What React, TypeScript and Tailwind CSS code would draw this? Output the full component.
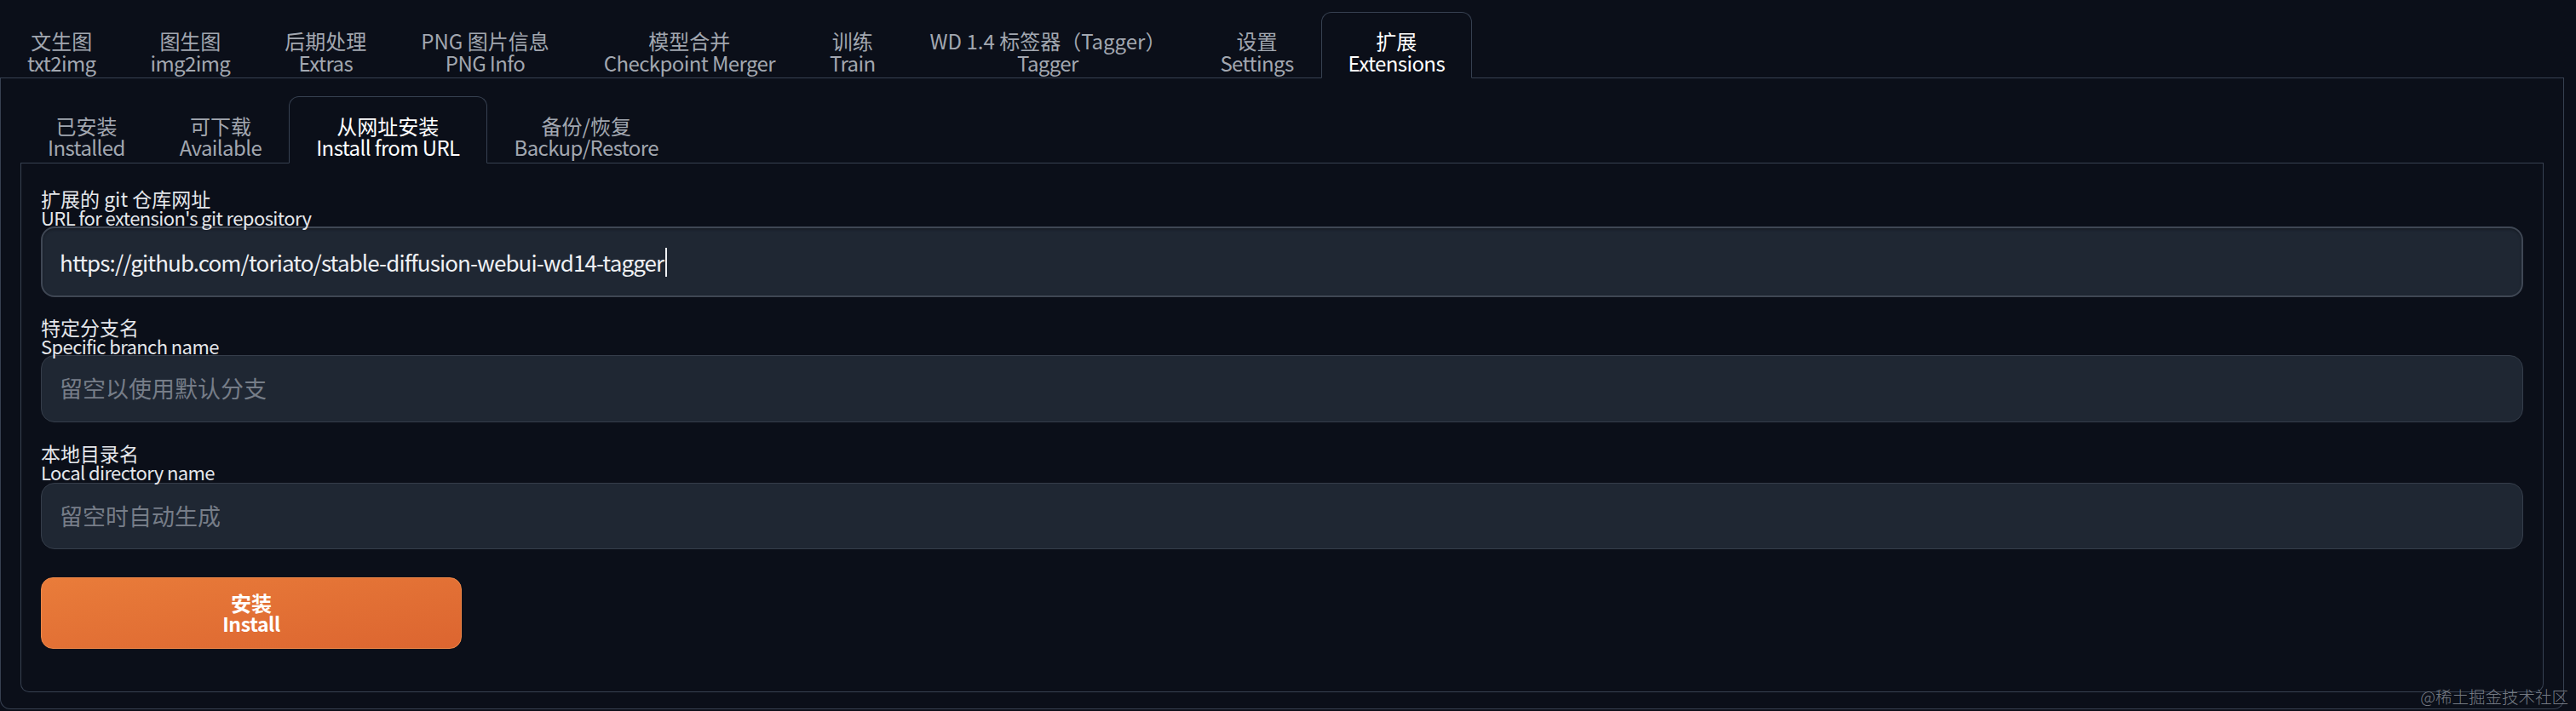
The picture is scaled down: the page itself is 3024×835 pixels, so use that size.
import React from 'react';

const topTabs: [string, string][] = [
  ['文生图', 'txt2img'],
  ['图生图', 'img2img'],
  ['后期处理', 'Extras'],
  ['PNG 图片信息', 'PNG Info'],
  ['模型合并', 'Checkpoint Merger'],
  ['训练', 'Train'],
  ['WD 1.4 标签器（Tagger）', 'Tagger'],
  ['设置', 'Settings'],
  ['扩展', 'Extensions'],
];

const subTabs: [string, string][] = [
  ['已安装', 'Installed'],
  ['可下载', 'Available'],
  ['从网址安装', 'Install from URL'],
  ['备份/恢复', 'Backup/Restore'],
];

interface TabProps {
  zh: string;
  en: string;
  active: boolean;
  sub?: boolean;
}

const Tab: React.FC<TabProps> = ({ zh, en, active, sub }) => (
  <div
    className={`-mb-px flex flex-col items-center border px-[31px] text-[24px] whitespace-nowrap ${
      sub ? 'h-[79px] pt-[21px] leading-[25px]' : 'h-[78px] pt-[20px] leading-[26px]'
    } ${
      active
        ? 'relative z-10 rounded-t-[12px] border-[#374151] border-b-[#0b0f19] bg-[#0b0f19] text-white'
        : 'border-transparent text-[#a2a7b0]'
    }`}
  >
    <span>{zh}</span>
    <span className="tracking-[-0.6px]">{en}</span>
  </div>
);

const Label: React.FC<{ zh: string; en: string }> = ({ zh, en }) => (
  <div className="flex flex-col leading-[22px] text-[#e5e7eb]">
    <span className="text-[23px]">{zh}</span>
    <span className="text-[22px] tracking-[-0.6px]">{en}</span>
  </div>
);

export default function App() {
  return (
    <div className="relative h-[835px] w-full bg-[#0b0f19] pt-[14px] font-['Noto_Sans_CJK_SC','Noto_Sans',sans-serif] antialiased">
      <div className="w-[3010px]">
        {/* top level tabs */}
        <div className="flex border-b border-[#374151]">
          {topTabs.map(([zh, en], i) => (
            <Tab key={en} zh={zh} en={en} active={i === topTabs.length - 1} />
          ))}
        </div>

        <div className="rounded-b-[12px] border-x border-b border-[#374151] px-[23px] pt-[21px] pb-[19px]">
          {/* extension sub tabs */}
          <div className="flex border-b border-[#374151]">
            {subTabs.map(([zh, en], i) => (
              <Tab key={en} zh={zh} en={en} active={i === 2} sub />
            ))}
          </div>

          <div className="rounded-b-[10px] border-x border-b border-[#374151] px-[23px] pt-[30px] pb-[50px]">
            <Label zh="扩展的 git 仓库网址" en="URL for extension's git repository" />
            <div className="flex h-[83px] items-center rounded-[16px] border-2 border-[#3f4754] bg-[#1f2733] px-[20px] text-[26px] tracking-[-0.9px] text-[#eef0f3] shadow-[inset_0_2px_3px_rgba(0,0,0,0.25)]">
              <span>https://github.com/toriato/stable-diffusion-webui-wd14-tagger</span>
              <span className="ml-[2px] inline-block h-[34px] w-[2px] bg-[#eef0f3]" />
            </div>

            <div className="mt-[24px]">
              <Label zh="特定分支名" en="Specific branch name" />
            </div>
            <div className="flex h-[79px] items-center rounded-[16px] border border-[#353d4a] bg-[#1f2733] px-[21px] text-[27px] text-[#767d88]">
              留空以使用默认分支
            </div>

            <div className="mt-[25px]">
              <Label zh="本地目录名" en="Local directory name" />
            </div>
            <div className="mt-[2px] flex h-[78px] items-center rounded-[16px] border border-[#353d4a] bg-[#1f2733] px-[21px] text-[27px] text-[#767d88]">
              留空时自动生成
            </div>

            <button className="mt-[33px] flex h-[84px] w-[494px] flex-col items-center justify-center rounded-[14px] border border-[#ee8848] bg-gradient-to-br from-[#e97c3a] to-[#dc6530] text-white">
              <span className="text-[24px] leading-[25px] font-bold">安装</span>
              <span className="text-[23px] leading-[25px] font-semibold tracking-[-0.4px]">Install</span>
            </button>
          </div>
        </div>
      </div>

      <span className="absolute right-[9px] bottom-[6px] text-[19.5px] leading-[22px] font-light text-[#9297a0]/80">
        @稀土掘金技术社区
      </span>
    </div>
  );
}
